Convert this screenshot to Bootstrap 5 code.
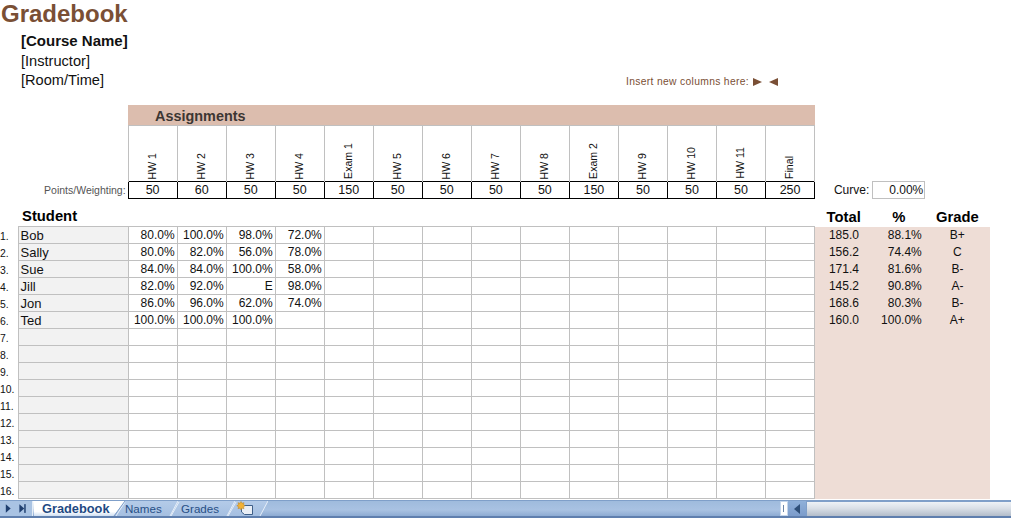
<!DOCTYPE html>
<html lang="en"><head><meta charset="utf-8"><title>Gradebook</title>
<link href="https://cdn.jsdelivr.net/npm/bootstrap@5.3.0/dist/css/bootstrap.min.css" rel="stylesheet">
<style>
html,body{height:518px;overflow:hidden;background:#fff}
body{font-family:"Liberation Sans",Arial,sans-serif;font-size:12px;color:#111;width:1011px}
.sheet-top{height:105px}
.gb-title{font-size:24px;font-weight:700;color:#7a4f35;line-height:28px;margin:0;padding-left:1px}
.course{padding:22px 0 0 21px;font-size:14.6px;line-height:19.5px;position:absolute;top:10px;left:0}
.course .fw-bold{font-size:15px;margin-top:-1px;margin-bottom:1px}
.insert-note{width:815px;height:105px;padding:76px 37px 0 0;font-size:10.3px;line-height:12px;color:#7a4f35;letter-spacing:.33px}
.tri{display:inline-block;width:0;height:0;border-top:4px solid transparent;border-bottom:4px solid transparent;vertical-align:-1px}
.tri-r{border-left:9px solid #7a4f35;margin-left:4px}
.tri-l{border-right:9px solid #7a4f35;margin-left:7px}
table.gb{table-layout:fixed;width:990px;border-collapse:collapse;margin:0;font-size:12px;color:#111}
table.gb td,table.gb th{padding:1px 0 0;overflow:visible;white-space:nowrap;height:17px;line-height:15px;border:0;box-shadow:none;background:transparent;color:inherit}
table.gb .c-idx{font-size:10.4px;text-align:left;vertical-align:bottom}
table.gb .band{background:#dcbdae;height:20px;font-size:14.4px;font-weight:700;color:#3c3633;padding:2px 0 0 27px;line-height:18px}
table.gb .hd{height:56px;border:1px solid #c0c0c0;border-bottom:0;vertical-align:bottom;text-align:center}
.rot{writing-mode:vertical-rl;transform:rotate(180deg);font-size:10.6px;line-height:12px;display:inline-block;padding-top:2px;margin-right:2px;vertical-align:bottom}
table.gb .pl{font-size:10.5px;color:#555;text-align:right;padding-right:2px}
table.gb .pt{border:1px solid #000;text-align:center;font-size:12.5px}
table.gb .cv{text-align:right;padding-right:3px}
table.gb .cvb{border:1px solid #c0c0c0;text-align:right;padding-right:1px}
table.gb .hh{height:28px;font-size:14.8px;font-weight:700;vertical-align:bottom;line-height:19px;color:#000}
table.gb .hs{padding-left:4px}
table.gb .tc{text-align:center}
table.gb .g{border:1px solid #c0c0c0;text-align:right;padding-right:2px}
table.gb .nm{border:1px solid #c0c0c0;background:#f2f2f2;text-align:left;padding:1px 0 0 2px;font-size:13px}
table.gb .rz{background:#eeddd6;text-align:center}
table.gb .rr{background:#eeddd6;text-align:right;padding-right:3px}
.tabbar{position:absolute;left:0;top:500px;width:1011px;height:18px;background:linear-gradient(#9fbbdd,#a9c2e2 60%,#8dabd3);border-top:1px solid #7f9fc9;border-bottom:2px solid #5f7fae}
.navb{width:33px;height:15px;background:#a9c3e3;border-right:1px solid #e4edf7}
.tabs{height:15px}
.tabshape{position:relative;height:15px;font-size:11.6px;line-height:16px;color:#274f86;text-align:left}
.tabshape svg{position:absolute;left:0;top:0;width:100%;height:15px}
.tabshape span{position:relative}
.tabshape.on{font-weight:700;font-size:12.8px;color:#1f4a83;z-index:3}
.t1{width:92px;padding-left:9px}
.t2{width:63px;margin-left:-10px;padding-left:10px;z-index:2}
.t3{width:65px;margin-left:-8px;padding-left:11px;z-index:1}
.t4{width:41px;margin-left:-8px}
.split{width:8px;height:15px;background:#fff;border:1px solid #c5d6ec;margin-left:auto;padding:3px 2px}
.split i{display:block;width:1px;height:7px;background:#6d86a8}
.sarrow{width:19px;height:15px;background:linear-gradient(#8fb0d9,#7c9ccb);display:flex;align-items:center;justify-content:center}
.strack{width:205px;height:15px;margin-left:-1px;border:1px solid #7f9fc9;border-width:1px 0 0 1px;background:linear-gradient(#eef2f7,#d9dfe7 45%,#b3bdca)}
</style></head>
<body>
<div class="sheet-top position-relative d-flex flex-column">
<h1 class="gb-title">Gradebook</h1>
<div class="course"><div class="fw-bold">[Course Name]</div><div>[Instructor]</div><div>[Room/Time]</div></div>
<div class="insert-note position-absolute top-0 start-0 text-end">Insert new columns here:<span class="tri tri-r"></span><span class="tri tri-l"></span></div>
</div>
<table class="gb table">
<colgroup><col style="width:18px"><col style="width:110px"><col span="14" style="width:49px"><col style="width:58px"><col style="width:52px"><col style="width:65px"></colgroup>
<tbody>
<tr><td colspan="2"></td><td class="band" colspan="14">Assignments</td><td colspan="3"></td></tr>
<tr><td colspan="2"></td>
<td class="hd"><span class="rot">HW 1</span></td><td class="hd"><span class="rot">HW 2</span></td><td class="hd"><span class="rot">HW 3</span></td><td class="hd"><span class="rot">HW 4</span></td><td class="hd"><span class="rot">Exam 1</span></td><td class="hd"><span class="rot">HW 5</span></td><td class="hd"><span class="rot">HW 6</span></td><td class="hd"><span class="rot">HW 7</span></td><td class="hd"><span class="rot">HW 8</span></td><td class="hd"><span class="rot">Exam 2</span></td><td class="hd"><span class="rot">HW 9</span></td><td class="hd"><span class="rot">HW 10</span></td><td class="hd"><span class="rot">HW 11</span></td><td class="hd"><span class="rot">Final</span></td>
<td colspan="3"></td></tr>
<tr><td class="pl" colspan="2">Points/Weighting:</td>
<td class="pt">50</td><td class="pt">60</td><td class="pt">50</td><td class="pt">50</td><td class="pt">150</td><td class="pt">50</td><td class="pt">50</td><td class="pt">50</td><td class="pt">50</td><td class="pt">150</td><td class="pt">50</td><td class="pt">50</td><td class="pt">50</td><td class="pt">250</td>
<td class="cv">Curve:</td><td class="cvb">0.00%</td><td></td></tr>
<tr><td></td><th class="hh hs">Student</th><td colspan="14" class="hh"></td><th class="hh tc">Total</th><th class="hh tc">%</th><th class="hh tc">Grade</th></tr>
<tr><td class="c-idx">1.</td><td class="nm">Bob</td><td class="g">80.0%</td><td class="g">100.0%</td><td class="g">98.0%</td><td class="g">72.0%</td><td class="g"></td><td class="g"></td><td class="g"></td><td class="g"></td><td class="g"></td><td class="g"></td><td class="g"></td><td class="g"></td><td class="g"></td><td class="g"></td><td class="rz">185.0</td><td class="rr">88.1%</td><td class="rz">B+</td></tr>
<tr><td class="c-idx">2.</td><td class="nm">Sally</td><td class="g">80.0%</td><td class="g">82.0%</td><td class="g">56.0%</td><td class="g">78.0%</td><td class="g"></td><td class="g"></td><td class="g"></td><td class="g"></td><td class="g"></td><td class="g"></td><td class="g"></td><td class="g"></td><td class="g"></td><td class="g"></td><td class="rz">156.2</td><td class="rr">74.4%</td><td class="rz">C</td></tr>
<tr><td class="c-idx">3.</td><td class="nm">Sue</td><td class="g">84.0%</td><td class="g">84.0%</td><td class="g">100.0%</td><td class="g">58.0%</td><td class="g"></td><td class="g"></td><td class="g"></td><td class="g"></td><td class="g"></td><td class="g"></td><td class="g"></td><td class="g"></td><td class="g"></td><td class="g"></td><td class="rz">171.4</td><td class="rr">81.6%</td><td class="rz">B-</td></tr>
<tr><td class="c-idx">4.</td><td class="nm">Jill</td><td class="g">82.0%</td><td class="g">92.0%</td><td class="g">E</td><td class="g">98.0%</td><td class="g"></td><td class="g"></td><td class="g"></td><td class="g"></td><td class="g"></td><td class="g"></td><td class="g"></td><td class="g"></td><td class="g"></td><td class="g"></td><td class="rz">145.2</td><td class="rr">90.8%</td><td class="rz">A-</td></tr>
<tr><td class="c-idx">5.</td><td class="nm">Jon</td><td class="g">86.0%</td><td class="g">96.0%</td><td class="g">62.0%</td><td class="g">74.0%</td><td class="g"></td><td class="g"></td><td class="g"></td><td class="g"></td><td class="g"></td><td class="g"></td><td class="g"></td><td class="g"></td><td class="g"></td><td class="g"></td><td class="rz">168.6</td><td class="rr">80.3%</td><td class="rz">B-</td></tr>
<tr><td class="c-idx">6.</td><td class="nm">Ted</td><td class="g">100.0%</td><td class="g">100.0%</td><td class="g">100.0%</td><td class="g"></td><td class="g"></td><td class="g"></td><td class="g"></td><td class="g"></td><td class="g"></td><td class="g"></td><td class="g"></td><td class="g"></td><td class="g"></td><td class="g"></td><td class="rz">160.0</td><td class="rr">100.0%</td><td class="rz">A+</td></tr>
<tr><td class="c-idx">7.</td><td class="nm"></td><td class="g"></td><td class="g"></td><td class="g"></td><td class="g"></td><td class="g"></td><td class="g"></td><td class="g"></td><td class="g"></td><td class="g"></td><td class="g"></td><td class="g"></td><td class="g"></td><td class="g"></td><td class="g"></td><td class="rz"></td><td class="rr"></td><td class="rz"></td></tr>
<tr><td class="c-idx">8.</td><td class="nm"></td><td class="g"></td><td class="g"></td><td class="g"></td><td class="g"></td><td class="g"></td><td class="g"></td><td class="g"></td><td class="g"></td><td class="g"></td><td class="g"></td><td class="g"></td><td class="g"></td><td class="g"></td><td class="g"></td><td class="rz"></td><td class="rr"></td><td class="rz"></td></tr>
<tr><td class="c-idx">9.</td><td class="nm"></td><td class="g"></td><td class="g"></td><td class="g"></td><td class="g"></td><td class="g"></td><td class="g"></td><td class="g"></td><td class="g"></td><td class="g"></td><td class="g"></td><td class="g"></td><td class="g"></td><td class="g"></td><td class="g"></td><td class="rz"></td><td class="rr"></td><td class="rz"></td></tr>
<tr><td class="c-idx">10.</td><td class="nm"></td><td class="g"></td><td class="g"></td><td class="g"></td><td class="g"></td><td class="g"></td><td class="g"></td><td class="g"></td><td class="g"></td><td class="g"></td><td class="g"></td><td class="g"></td><td class="g"></td><td class="g"></td><td class="g"></td><td class="rz"></td><td class="rr"></td><td class="rz"></td></tr>
<tr><td class="c-idx">11.</td><td class="nm"></td><td class="g"></td><td class="g"></td><td class="g"></td><td class="g"></td><td class="g"></td><td class="g"></td><td class="g"></td><td class="g"></td><td class="g"></td><td class="g"></td><td class="g"></td><td class="g"></td><td class="g"></td><td class="g"></td><td class="rz"></td><td class="rr"></td><td class="rz"></td></tr>
<tr><td class="c-idx">12.</td><td class="nm"></td><td class="g"></td><td class="g"></td><td class="g"></td><td class="g"></td><td class="g"></td><td class="g"></td><td class="g"></td><td class="g"></td><td class="g"></td><td class="g"></td><td class="g"></td><td class="g"></td><td class="g"></td><td class="g"></td><td class="rz"></td><td class="rr"></td><td class="rz"></td></tr>
<tr><td class="c-idx">13.</td><td class="nm"></td><td class="g"></td><td class="g"></td><td class="g"></td><td class="g"></td><td class="g"></td><td class="g"></td><td class="g"></td><td class="g"></td><td class="g"></td><td class="g"></td><td class="g"></td><td class="g"></td><td class="g"></td><td class="g"></td><td class="rz"></td><td class="rr"></td><td class="rz"></td></tr>
<tr><td class="c-idx">14.</td><td class="nm"></td><td class="g"></td><td class="g"></td><td class="g"></td><td class="g"></td><td class="g"></td><td class="g"></td><td class="g"></td><td class="g"></td><td class="g"></td><td class="g"></td><td class="g"></td><td class="g"></td><td class="g"></td><td class="g"></td><td class="rz"></td><td class="rr"></td><td class="rz"></td></tr>
<tr><td class="c-idx">15.</td><td class="nm"></td><td class="g"></td><td class="g"></td><td class="g"></td><td class="g"></td><td class="g"></td><td class="g"></td><td class="g"></td><td class="g"></td><td class="g"></td><td class="g"></td><td class="g"></td><td class="g"></td><td class="g"></td><td class="g"></td><td class="rz"></td><td class="rr"></td><td class="rz"></td></tr>
<tr><td class="c-idx">16.</td><td class="nm"></td><td class="g"></td><td class="g"></td><td class="g"></td><td class="g"></td><td class="g"></td><td class="g"></td><td class="g"></td><td class="g"></td><td class="g"></td><td class="g"></td><td class="g"></td><td class="g"></td><td class="g"></td><td class="g"></td><td class="rz"></td><td class="rr"></td><td class="rz"></td></tr>
</tbody></table>
<div class="tabbar d-flex align-items-start">
<div class="navb d-flex align-items-center"><svg width="33" height="15" viewBox="0 0 33 15"><path d="M6 3l5 4.500-5 4.500z" fill="#1f3f70"/><path d="M20 3l5 4.500-5 4.500z" fill="#1f3f70"/><rect x="25" y="3" width="1.500" height="9" fill="#1f3f70"/></svg></div>
<div class="tabs d-flex">
<div class="tabshape on t1"><svg viewBox="0 0 92 15" preserveAspectRatio="none"><defs><linearGradient id="ga" x1="0" y1="0" x2="0" y2="1"><stop offset="0" stop-color="#fff"/><stop offset=".7" stop-color="#fff"/><stop offset="1" stop-color="#cfdff2"/></linearGradient><linearGradient id="gb" x1="0" y1="0" x2="0" y2="1"><stop offset="0" stop-color="#b4cbe8"/><stop offset="1" stop-color="#a5bfe1"/></linearGradient></defs><path d="M0 0H92L81 15H1z" fill="url(#ga)"/><path d="M92 0L81 15" stroke="#7f9fc9" fill="none"/></svg><span>Gradebook</span></div>
<div class="tabshape t2"><svg viewBox="0 0 63 15" preserveAspectRatio="none"><path d="M0 15L10 0H63L55 15z" fill="url(#gb)"/><path d="M1 15L10 1M63 0L55 15" stroke="#e6eef8" fill="none"/></svg><span>Names</span></div>
<div class="tabshape t3"><svg viewBox="0 0 65 15" preserveAspectRatio="none"><path d="M0 15L8 0H65L57 15z" fill="url(#gb)"/><path d="M1 15L9 1M65 0L57 15" stroke="#e6eef8" fill="none"/></svg><span>Grades</span></div>
<div class="tabshape t4"><svg viewBox="0 0 41 15" preserveAspectRatio="none"><path d="M0 15L8 0H41L33 15z" fill="url(#gb)"/><path d="M1 15L9 1M41 0L33 15" stroke="#e6eef8" fill="none"/><path d="M14.500 4.500H25.500V13.500H17.500L14.500 11z" fill="#e9eef5" stroke="#3f5f88"/><path d="M14 0.500l1 1.800 2-.6-.6 2 1.800 1-1.800 1 .6 2-2-.6-1 1.800-1-1.800-2 .6.600-2-1.800-1 1.800-1-.6-2 2 .6z" fill="#f2b134" stroke="#b9801e" stroke-width=".5"/></svg></div>
</div>
<div class="split"><i></i></div>
<div class="sarrow"><svg width="7" height="10" viewBox="0 0 7 10"><path d="M6 0v10L0 5z" fill="#2f4f78"/></svg></div>
<div class="strack"></div>
</div>
<script src="https://cdn.jsdelivr.net/npm/bootstrap@5.3.0/dist/js/bootstrap.bundle.min.js"></script>
</body></html>
